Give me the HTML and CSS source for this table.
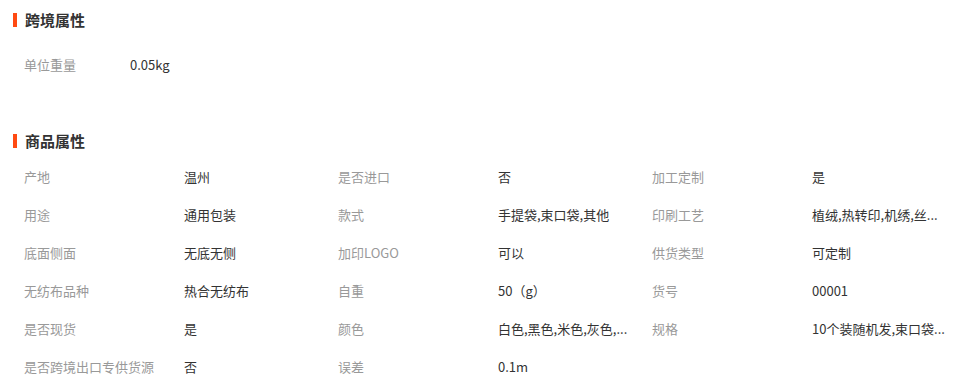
FILE: index.html
```html
<!DOCTYPE html>
<html lang="zh-CN">
<head>
<meta charset="utf-8">
<link rel="stylesheet" href="styles.css">
</head>
<body>
<section class="sec sec-cross">
  <h2 class="sec-title">跨境属性</h2>
  <div class="kv-list">
    <div class="kv kv-single">
      <span class="k">单位重量</span><span class="v">0.05kg</span>
    </div>
  </div>
</section>
<section class="sec sec-goods">
  <h2 class="sec-title">商品属性</h2>
  <div class="kv-grid">
    <div class="kv"><span class="k">产地</span><span class="v">温州</span></div>
    <div class="kv"><span class="k">是否进口</span><span class="v">否</span></div>
    <div class="kv"><span class="k">加工定制</span><span class="v">是</span></div>
    <div class="kv"><span class="k">用途</span><span class="v">通用包装</span></div>
    <div class="kv"><span class="k">款式</span><span class="v">手提袋,束口袋,其他</span></div>
    <div class="kv"><span class="k">印刷工艺</span><span class="v">植绒,热转印,机绣,丝...</span></div>
    <div class="kv"><span class="k">底面侧面</span><span class="v">无底无侧</span></div>
    <div class="kv"><span class="k">加印LOGO</span><span class="v">可以</span></div>
    <div class="kv"><span class="k">供货类型</span><span class="v">可定制</span></div>
    <div class="kv"><span class="k">无纺布品种</span><span class="v">热合无纺布</span></div>
    <div class="kv"><span class="k">自重</span><span class="v">50（g）</span></div>
    <div class="kv"><span class="k">货号</span><span class="v">00001</span></div>
    <div class="kv"><span class="k">是否现货</span><span class="v">是</span></div>
    <div class="kv"><span class="k">颜色</span><span class="v">白色,黑色,米色,灰色,...</span></div>
    <div class="kv"><span class="k">规格</span><span class="v">10个装随机发,束口袋...</span></div>
    <div class="kv"><span class="k">是否跨境出口专供货源</span><span class="v">否</span></div>
    <div class="kv"><span class="k">误差</span><span class="v">0.1m</span></div>
  </div>
</section>
</body>
</html>
```

FILE: styles.css
```css
* { box-sizing: border-box; }
html, body { margin: 0; padding: 0; background: #fff; }
body {
  width: 968px;
  height: 390px;
  overflow: hidden;
  font-family: "Microsoft YaHei", "Noto Sans CJK SC", "Noto Sans", sans-serif;
  font-size: 13px;
  color: #333;
}
.sec-title {
  margin: 0 0 0 13px;
  padding-left: 8px;
  border-left: 4px solid #ff4a12;
  font-size: 15px;
  font-weight: bold;
  line-height: 14px;
  height: 14px;
  color: #333;
}
.sec-cross { padding-top: 13px; }
.sec-cross .kv-list { margin-top: 18px; padding-left: 24px; }
.sec-goods { margin-top: 51px; }
.sec-goods .kv-grid { margin-top: 9px; }
.kv-grid {
  padding-left: 24px;
  display: grid;
  grid-template-columns: repeat(3, 314px);
}
.kv {
  display: flex;
  align-items: center;
  height: 38px;
  white-space: nowrap;
}
.k {
  width: 160px;
  flex: none;
  color: #999;
}
.kv-single .k { width: 106px; }
.v {
  color: #333;
}
```
